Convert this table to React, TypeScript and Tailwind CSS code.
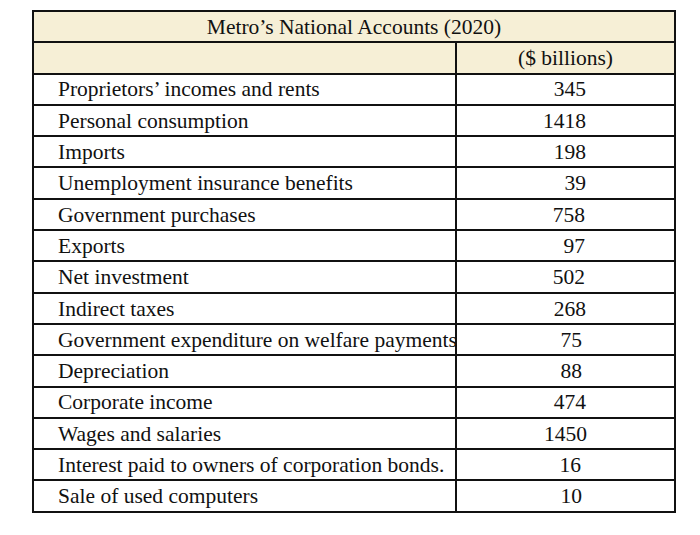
import React from "react";

const rows: [string, string, number][] = [
  ["Proprietors\u2019 incomes and rents", "345", 88],
  ["Personal consumption", "1418", 88],
  ["Imports", "198", 88],
  ["Unemployment insurance benefits", "39", 88],
  ["Government purchases", "758", 89],
  ["Exports", "97", 89],
  ["Net investment", "502", 89],
  ["Indirect taxes", "268", 88],
  ["Government expenditure on welfare payments", "75", 92],
  ["Depreciation", "88", 92],
  ["Corporate income", "474", 88],
  ["Wages and salaries", "1450", 87],
  ["Interest paid to owners of corporation bonds.", "16", 93],
  ["Sale of used computers", "10", 92],
];

export default function App() {
  return (
    <div
      className="w-[700px] h-[535px] bg-white pt-[10px] pl-[32px]"
      style={{ fontFamily: '"Liberation Serif", "Times New Roman", serif' }}
    >
      <div className="w-[644px] border-2 border-[#111] flex flex-col text-[21.5px] text-[#111] leading-none">
        <div className="h-[29.3px] bg-[#f6efd6] flex items-center justify-center pt-[2px]">
          Metro&rsquo;s National Accounts (2020)
        </div>
        <div className="h-[31.3px] bg-[#f6efd6] border-t-2 border-[#111] flex">
          <div className="w-[423px] border-r-2 border-[#111]" />
          <div className="flex-1 flex items-center justify-center pt-[2px]">($ billions)</div>
        </div>
        {rows.map(([label, value, pr]) => (
          <div key={label} className="h-[31.3px] border-t-2 border-[#111] flex">
            <div className="w-[423px] border-r-2 border-[#111] flex items-center pl-[24px] pt-[2px] whitespace-nowrap">
              {label}
            </div>
            <div
              className="flex-1 flex items-center justify-end pt-[2px]"
              style={{ paddingRight: pr }}
            >
              {value}
            </div>
          </div>
        ))}
      </div>
    </div>
  );
}
